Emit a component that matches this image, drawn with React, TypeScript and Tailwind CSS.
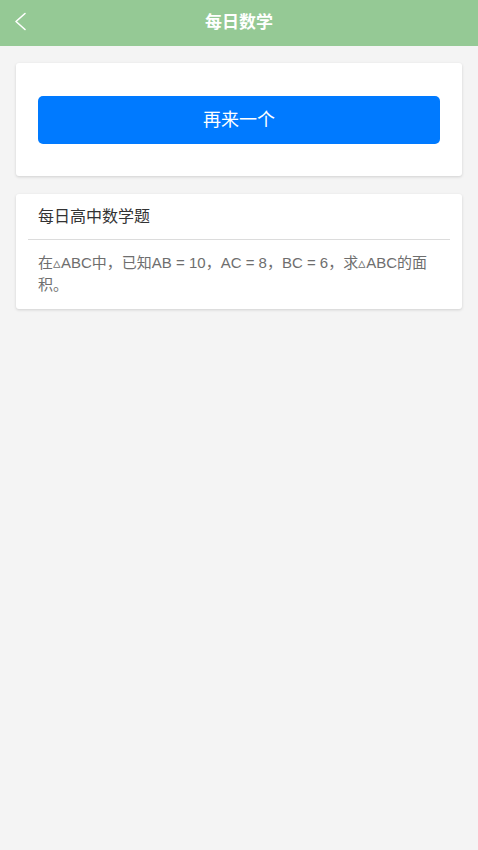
const font = { fontFamily: '"Liberation Sans", "Noto Sans CJK SC", sans-serif' };

export default function App() {
    return (
        <div className="min-h-[850px] bg-[#f4f4f4]" style={font}>
            {/* Header bar */}
            <div className="relative flex h-[46px] items-center justify-center bg-[#95c995]">
                <svg
                    className="absolute left-[13px] top-[12px]"
                    width="14"
                    height="19"
                    viewBox="0 0 14 19"
                    fill="none"
                    stroke="white"
                    strokeWidth="1.6"
                    strokeLinecap="round"
                    strokeLinejoin="round"
                >
                    <path d="M12 1.5 3 9.5l9 8" />
                </svg>
                <span className="text-[17px] font-bold text-white">每日数学</span>
            </div>

            <div className="flex flex-col gap-[18px] px-[16px] pt-[17px]">
                {/* Refresh card */}
                <div className="rounded-[3px] bg-white px-[22px] pb-[32px] pt-[33px] shadow-[0_1px_3px_rgba(0,0,0,0.15)]">
                    <button className="flex h-[48px] w-full items-center justify-center rounded-[5px] bg-[#007aff] text-[18px] text-white">
                        再来一个
                    </button>
                </div>

                {/* Question card */}
                <div className="rounded-[3px] bg-white px-[12px] pb-[13px] shadow-[0_1px_3px_rgba(0,0,0,0.15)]">
                    <div className="border-b border-[#dcdcdc] px-[10px] pb-[12px] pt-[13px] text-[16px] leading-[20px] text-[#333]">
                        每日高中数学题
                    </div>
                    <p className="pl-[10px] pr-[16px] pt-[12px] text-[15px] leading-[22px] text-[#6e6e6e]">
                        在▵ABC中，已知AB = 10，AC = 8，BC = 6，求▵ABC的面积。
                    </p>
                </div>
            </div>
        </div>
    );
}
